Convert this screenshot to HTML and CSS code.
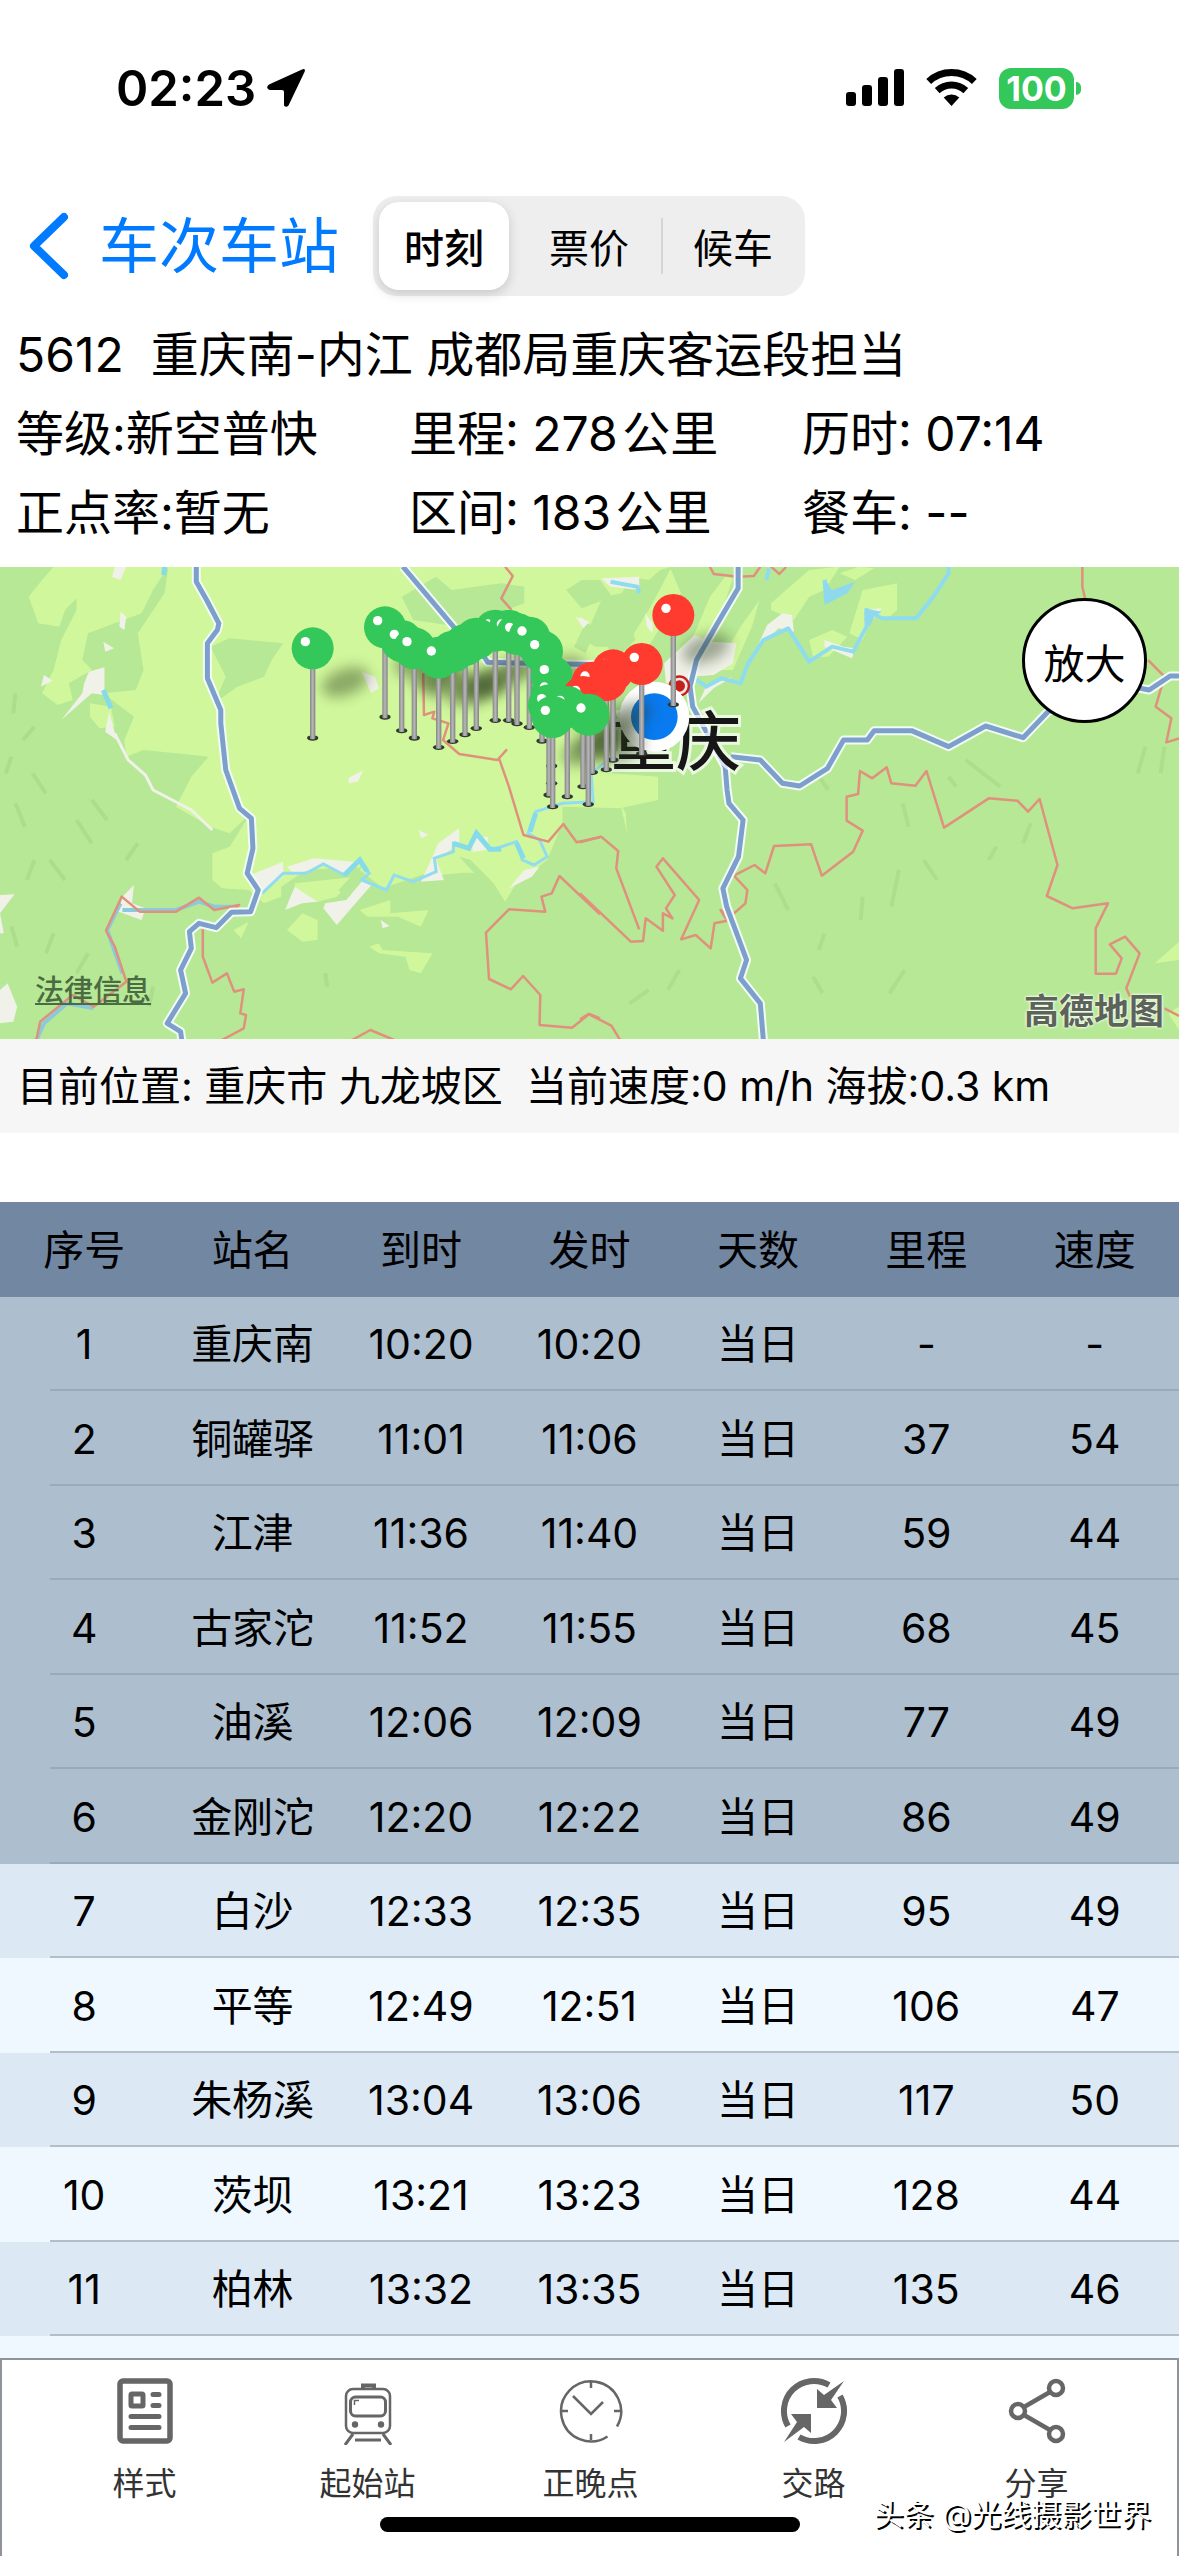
FILE: index.html
```html
<!DOCTYPE html>
<html lang="zh-CN">
<head>
<meta charset="utf-8">
<meta name="viewport" content="width=device-width, initial-scale=1">
<title>5612 重庆南-内江</title>
<link rel="stylesheet" href="styles.css">
</head>
<body>
<div class="app">
  <div class="status">
    <div class="status-side">
      <span class="clock">02:23</span>
      <svg class="arrow" width="40" height="40" viewBox="0 0 40 40"><path d="M3 16.500 36 1.500Q40 0 38.500 4L22.500 37.500Q20 40 18 37.500V24Q18 22 16 22H3.500Q-1 19.500 3 16.500Z"/></svg>
    </div>
    <div class="status-side">
      <svg width="58" height="38" viewBox="0 0 58 38"><rect y="23" width="10" height="14" rx="3"/><rect x="16" y="16" width="10" height="21" rx="3"/><rect x="32" y="8" width="10" height="29" rx="3"/><rect x="48" y="0" width="10" height="37" rx="3"/></svg>
      <svg class="wifi" width="51" height="38" viewBox="0 0 51 38"><path d="M2.700 12.500A33.500 33.500 0 0 1 48.300 12.500M11.200 21.600A21 21 0 0 1 39.800 21.600" fill="none" stroke="#000" stroke-width="7"/><path d="M25.500 37 17.700 28.600A11.500 11.500 0 0 1 33.300 28.600Z"/></svg>
      <span class="battery">100</span>
    </div>
  </div>

  <header class="nav">
    <a class="back" href="#">
      <svg width="42" height="68" viewBox="0 0 42 68"><path d="M36 5 6 34 36 63" fill="none" stroke="currentColor" stroke-width="8" stroke-linecap="round" stroke-linejoin="round"/></svg>
      <span>车次车站</span>
    </a>
    <div class="segments">
      <button class="segment segment-on" type="button">时刻</button>
      <button class="segment" type="button">票价</button>
      <button class="segment segment-split" type="button">候车</button>
    </div>
  </header>

  <section class="info">
    <div class="info-title">5612&nbsp; 重庆南-内江 成都局重庆客运段担当</div>
    <div>等级:新空普快</div><div>里程: 278&#8202;公里</div><div>历时: 07:14</div>
    <div>正点率:暂无</div><div>区间: 183&#8202;公里</div><div>餐车: --</div>
  </section>

  <section class="map">
    <svg class="map-art" viewBox="0 0 1179 472" preserveAspectRatio="xMidYMid slice">
      <defs>
        <filter id="soft" x="-80%" y="-80%" width="260%" height="260%"><feGaussianBlur stdDeviation="19"/></filter>
        <linearGradient id="stick"><stop offset="0" stop-color="#858585"/><stop offset=".5" stop-color="#b8b8b8"/><stop offset="1" stop-color="#808080"/></linearGradient>
        <g id="shade"><ellipse cx="98" cy="-168" rx="74" ry="40" transform="rotate(-20 98 -168)" fill="#283818" opacity=".4" filter="url(#soft)"/></g>
        <g id="stem"><ellipse rx="17" ry="8" fill="#2d3a2c"/><rect x="-8" y="-215" width="16" height="219" rx="3" fill="url(#stick)"/></g>
        <g id="green"><use href="#stem"/><circle cy="-269" r="63" fill="#34c759"/><circle cx="-22" cy="-289" r="14" fill="#fff"/></g>
        <g id="red"><use href="#stem"/><circle cy="-269" r="63" fill="#ff3b30"/><circle cx="-22" cy="-289" r="14" fill="#fff"/></g>
      </defs>
      <rect width="1179" height="472" fill="#b6e895"/>
      <!-- western half: land cover, rivers, borders and roads -->
      <g transform="translate(0 -7) scale(.38265 .33333)">
        <path fill="#d0f79c" d="M440 20 430 100 360 220 375 330 355 390 270 400 350 470 325 540 330 590 375 570 460 580 545 590 500 650 460 740 550 800 600 820 655 760 600 860 555 880 555 960 580 985 650 990 690 1030 735 1010 735 980 800 930 930 920 1000 985 1140 930 1240 940 1200 890 1230 900 1290 970 1320 1025 1350 970 1430 900 1470 790 1470 740 1620 745 1720 720 1720 650 1600 640 1600 400 1700 250 1780 100 1750 20Z"/>
        <path fill="#d0f79c" d="M75 110 110 60 140 20 440 20 400 90 370 160 300 190 230 220 215 300 240 330 180 370 190 420 150 435 110 400 140 330 160 240 200 150 200 115 170 150 155 200 100 190ZM235 430 290 440 300 500 260 505 235 470ZM770 970 930 950 880 1010 830 1025 770 1000ZM940 1050 1020 1020 1020 1060 1120 1050 1100 1100 1040 1070 960 1070ZM750 1110 790 1060 830 1080 830 1140 790 1145ZM965 1160 990 1150 1000 1170 1130 1180 1100 1240 1070 1230 1060 1190 990 1180ZM610 1110 650 1085 630 1135ZM1040 930 1150 900 1235 935 1150 945Z"/>
        <path fill="#b6e895" d="M560 430 590 350 550 260 600 235 740 250 710 300 690 350 620 380ZM1050 110 1140 50 1180 90 1310 70 1370 80 1370 130 1200 200 1080 180ZM1480 90 1520 60 1568 60 1600 110 1520 145ZM1500 260 1530 190 1560 200 1530 280ZM885 990 945 915 935 960 900 1010Z"/>
        <path fill="#f0f1e8" d="M300 20H330L315 60 293 50ZM315 155 330 170 325 210 312 200ZM270 245 298 265 275 275ZM232 335 273 322 273 405 240 400 160 480 215 400 220 370ZM115 345 138 362 107 380ZM285 455 305 540 275 515ZM655 945 740 905 740 950 685 1000ZM750 920 820 895 925 905 905 945 850 915 770 945ZM945 965 975 970 880 1095 845 1045 850 1030 905 1020ZM770 980 830 1025 790 1030 745 1050ZM1145 850 1200 805 1200 850 1140 900 1160 960 1100 965 1130 890ZM1235 835 1275 830 1275 870 1235 875ZM910 655 950 630 935 665 912 670ZM945 335 980 350 990 385 970 400ZM1505 170 1540 185 1525 205ZM1095 810 1120 825 1100 835ZM0 1005 38 1003 0 1060ZM0 1060 10 1120 0 1120ZM320 1010 350 975 345 1030 380 1045 370 1080 310 1055ZM995 1080 1018 1098 1000 1105ZM1370 930 1410 920 1390 950 1330 985ZM0 1290 20 1270 45 1340 35 1385 0 1390Z"/>
        <path fill="none" stroke="#f0f1e8" stroke-width="3" d="M300 520 335 600 380 645 400 690 500 750 555 810" vector-effect="non-scaling-stroke"/>
        <path fill="none" stroke="#93dcf0" stroke-width="3" vector-effect="non-scaling-stroke" d="M685 1000 740 940 800 940 845 912 900 945 940 900 965 940 945 960 1010 990 1030 945 1080 965 1140 935 1135 895 1185 875 1185 850 1225 865 1245 815 1285 870 1350 845 1365 900 1395 915 1430 890 1410 840 1380 820 1400 755 1470 730 1550 725 1545 640 1590 600"/>
        <path fill="none" stroke="#86dbea" stroke-width="5" vector-effect="non-scaling-stroke" d="M1185 850 1225 865 1245 820 1280 868 1310 868M1350 850 1368 895M1385 815 1400 760M270 390 290 445M430 20 428 45M900 945 940 900 960 935"/>
        <path fill="none" stroke="#8bcadb" stroke-width="4" vector-effect="non-scaling-stroke" d="M315 1030 280 1110 320 1240M320 1050 460 1050 520 1025 560 1040 620 1040M245 1345 175 1330 115 1390 95 1440"/>
        <path fill="none" stroke="#e0917d" stroke-width="2.500" stroke-linejoin="round" vector-effect="non-scaling-stroke" d="M95 1440 105 1385 190 1305 245 1340 330 1265 300 1160 277 1112 318 1010 365 1055 460 1055 520 1013 560 1050 625 1035 565 1105 530 1105 530 1190 555 1268 593 1240 612 1295 637 1288 628 1360 643 1365 637 1405 580 1440M920 1440 968 1410 1030 1440M1320 20 1340 48 1310 115 1337 150M1106 340 1108 465 1135 455 1130 475 1172 490 1158 540 1200 582 1300 600 1325 568M1305 598 1330 680 1368 825 1433 845 1472 792 1507 847 1568 832M1568 1063 1462 948 1442 1000 1415 1010 1425 1055 1330 1048 1270 1118 1278 1257 1335 1288 1367 1248 1412 1305 1410 1395 1495 1403 1540 1362 1568 1375"/>
        <path fill="none" stroke="#9ccf7c" stroke-width="4" opacity=".4" vector-effect="non-scaling-stroke" d="M40 400 35 460M30 590 15 640M40 730 65 800M85 640 120 700M70 960 90 900M200 780 240 850M130 900 170 960M30 1100 45 1160M120 1180 140 1120M200 1240 230 1180M60 540 90 500M330 900 360 850M240 720 280 780M400 1280 390 1340M850 1240 855 1280"/>
        <path fill="none" stroke="#f3fbf5" stroke-width="9" stroke-linejoin="round" vector-effect="non-scaling-stroke" d="M513 20V65L540 120 572 190 568 210 542 250V355L577 450V490L590 630 626 745 657 775 661 865 646 940 675 990 655 1055 605 1057 565 1103 520 1090 495 1115 500 1165 472 1230 485 1300 437 1390 472 1415 475 1440M1053 20 1185 200 1265 290 1275 307 1720 318"/>
        <path fill="none" stroke="#7c9fcc" stroke-width="5" stroke-linejoin="round" vector-effect="non-scaling-stroke" d="M513 20V65L540 120 572 190 568 210 542 250V355L577 450V490L590 630 626 745 657 775 661 865 646 940 675 990 655 1055 605 1057 565 1103 520 1090 495 1115 500 1165 472 1230 485 1300 437 1390 472 1415 475 1440M1053 20 1185 200 1265 290 1275 307 1720 318"/>
      </g>
      <!-- eastern half -->
      <g transform="translate(580 -7) scale(.382 .33333)">
        <path fill="#b6e895" d="M10 240 60 110 110 100 130 50 180 60 210 30 240 20 190 130 120 260 40 260ZM60 250 130 180 145 240 100 290Z"/>
        <path fill="#d0f79c" d="M290 250 340 110 380 50 400 55 370 160 320 270ZM500 130 560 70 600 30 680 20 640 90 600 110 560 180 500 150ZM740 90 830 70 830 150 800 180 770 160 740 240 705 220ZM600 240 660 210 700 230 650 290 610 290ZM355 330 420 200 470 120 450 200 400 330ZM680 40 730 20 770 25 720 60ZM1505 1210 1568 1145V1200ZM1540 1360 1568 1340V1410ZM105 730 120 760 123 820Z"/>
        <path fill="#f0f1e8" d="M55 55 155 50 155 90 80 80ZM300 225 345 245 410 250 400 310 350 345 290 350 225 370 220 310ZM490 195 530 160 555 165 560 215 520 205 460 270ZM640 240 690 260 720 265 712 295 640 260ZM310 430 350 385 400 350 330 380ZM740 150 790 145 770 175ZM0 170 20 185 5 200ZM170 160 190 190 190 220 175 200Z"/>
        <path fill="none" stroke="#8fdcf0" stroke-width="4" stroke-linejoin="round" vector-effect="non-scaling-stroke" d="M80 65 150 80 155 100M488 60 495 25M640 60 660 120M300 355 330 380 370 355 420 370 440 310 480 240 545 205 600 305 660 260 715 275 750 200 750 150 790 175 880 175 925 110 965 40V20"/>
        <path fill="#8fd9ef" d="M635 60 660 90 720 65 700 100 640 135ZM745 145 790 155 770 170 758 200 745 180Z"/>
        <path fill="none" stroke="#9ccf7c" stroke-width="4" opacity=".35" vector-effect="non-scaling-stroke" d="M510 970 545 1050M620 640 650 690M845 730 860 800M965 650 985 680M835 930 815 1040M900 900 935 960M1010 600 1100 680M740 1010 735 1080M610 1250 635 1300M180 1290 130 1330M1480 560 1460 640M1530 560 1520 640M1340 480 1360 440M260 1230 230 1290M640 1120 625 1170M1180 790 1160 850M1440 390 1410 440M1090 860 1070 900M850 1230 810 1300"/>
        <path fill="none" stroke="#e0917d" stroke-width="2.500" stroke-linejoin="round" vector-effect="non-scaling-stroke" d="M340 20 350 42 415 50 455 48 472 20M500 20 522 42 540 20M1315 20V80L1322 115M1487 300 1530 350 1507 440 1548 475 1535 547 1568 535M0 847 55 830 100 873 95 925 155 1108M0 1000 133 1145 165 1143 172 1075 217 1112 217 1060 242 1075 225 1045 248 1005 200 920 217 895 312 1020 265 1138 303 1125 342 1165 352 1090 385 1082 368 1050 395 1068 433 1030 438 990 403 947 457 915 485 940 508 858 605 853 633 947 715 875 740 812 698 782 698 710 728 702 733 633 765 655 803 622 815 670 878 677 907 633 953 803 1070 715 1145 722 1173 755 1203 717 1250 915 1222 1008 1290 1045 1382 1030 1350 1105V1241H1403L1418 1195 1387 1153 1427 1130 1465 1180 1430 1285 1440 1310M1530 1345 1568 1368M0 1378 22 1362 82 1397 105 1440"/>
        <path fill="none" stroke="#f3fbf5" stroke-width="9" stroke-linejoin="round" vector-effect="non-scaling-stroke" d="M414 20V85L360 190 305 300 288 380 295 440 380 620 385 690 390 730 427 780 415 890 374 985 384 1040 436 1200 420 1255 472 1330 480 1440M395 590 472 600 530 670 575 678 648 625 690 540H752L770 512H868L965 560 1062 498 1160 533 1225 455 1400 370 1490 390 1545 348H1568"/>
        <path fill="none" stroke="#7c9fcc" stroke-width="5" stroke-linejoin="round" vector-effect="non-scaling-stroke" d="M414 20V85L360 190 305 300 288 380 295 440 380 620 385 690 390 730 427 780 415 890 374 985 384 1040 436 1200 420 1255 472 1330 480 1440M395 590 472 600 530 670 575 678 648 625 690 540H752L770 512H868L965 560 1062 498 1160 533 1225 455 1400 370 1490 390 1545 348H1568"/>
      </g>
      <text class="city" x="611" y="198">重庆</text>
      <!-- current position and station pins, north to south -->
      <g transform="translate(340 13) scale(.33333)">
        <circle cx="1018" cy="318" r="32" fill="#c4201c"/><circle cx="1018" cy="318" r="25" fill="#f6e8e4"/><circle cx="1018" cy="318" r="17" fill="#c4201c"/>
        <circle cx="943" cy="410" r="105" fill="#fff"/><circle cx="943" cy="410" r="70" fill="#0a7af0"/>
        <g>
          <use href="#shade" x="-82" y="474"/><use href="#shade" x="135" y="411"/><use href="#shade" x="185" y="452"/><use href="#shade" x="223" y="474"/><use href="#shade" x="296" y="502"/><use href="#shade" x="338" y="484"/><use href="#shade" x="375" y="464"/><use href="#shade" x="466" y="421"/><use href="#shade" x="568" y="442"/><use href="#shade" x="635" y="558"/><use href="#shade" x="638" y="680"/><use href="#shade" x="682" y="650"/><use href="#shade" x="728" y="622"/><use href="#shade" x="745" y="673"/><use href="#shade" x="764" y="578"/><use href="#shade" x="1000" y="374"/>
        </g>
        <use href="#red" x="1000" y="374"/>
        <use href="#green" x="135" y="411"/>
        <use href="#green" x="466" y="421"/>
        <use href="#green" x="506" y="421"/>
        <use href="#green" x="531" y="431"/>
        <use href="#green" x="568" y="442"/>
        <use href="#green" x="409" y="445"/>
        <use href="#green" x="185" y="452"/>
        <use href="#green" x="375" y="464"/>
        <use href="#green" x="223" y="474"/>
        <use href="#green" x="-82" y="474"/>
        <use href="#green" x="606" y="483"/>
        <use href="#green" x="338" y="484"/>
        <use href="#green" x="296" y="502"/>
        <use href="#red" x="819" y="540"/>
        <use href="#red" x="905" y="521"/>
        <use href="#green" x="635" y="558"/>
        <use href="#red" x="799" y="569"/>
        <use href="#red" x="757" y="577"/>
        <use href="#green" x="635" y="610"/>
        <use href="#red" x="729" y="620"/>
        <use href="#green" x="627" y="645"/>
        <use href="#green" x="682" y="650"/>
        <use href="#green" x="745" y="673"/>
        <use href="#green" x="638" y="680"/>
      </g>
    </svg>
    <a class="legal" href="#">法律信息</a>
    <span class="provider">高德地图</span>
    <button class="enlarge" type="button">放大</button>
  </section>

  <p class="location">目前位置: 重庆市 九龙坡区&nbsp; 当前速度:0 m/h 海拔:0.3 km</p>

  <main class="timetable">
    <table>
      <thead><tr><th>序号</th><th>站名</th><th>到时</th><th>发时</th><th>天数</th><th>里程</th><th>速度</th></tr></thead>
      <tbody>
        <tr class="passed"><td>1</td><td>重庆南</td><td>10:20</td><td>10:20</td><td>当日</td><td>-</td><td>-</td></tr>
        <tr class="passed"><td>2</td><td>铜罐驿</td><td>11:01</td><td>11:06</td><td>当日</td><td>37</td><td>54</td></tr>
        <tr class="passed"><td>3</td><td>江津</td><td>11:36</td><td>11:40</td><td>当日</td><td>59</td><td>44</td></tr>
        <tr class="passed"><td>4</td><td>古家沱</td><td>11:52</td><td>11:55</td><td>当日</td><td>68</td><td>45</td></tr>
        <tr class="passed"><td>5</td><td>油溪</td><td>12:06</td><td>12:09</td><td>当日</td><td>77</td><td>49</td></tr>
        <tr class="passed"><td>6</td><td>金刚沱</td><td>12:20</td><td>12:22</td><td>当日</td><td>86</td><td>49</td></tr>
        <tr><td>7</td><td>白沙</td><td>12:33</td><td>12:35</td><td>当日</td><td>95</td><td>49</td></tr>
        <tr><td>8</td><td>平等</td><td>12:49</td><td>12:51</td><td>当日</td><td>106</td><td>47</td></tr>
        <tr><td>9</td><td>朱杨溪</td><td>13:04</td><td>13:06</td><td>当日</td><td>117</td><td>50</td></tr>
        <tr><td>10</td><td>茨坝</td><td>13:21</td><td>13:23</td><td>当日</td><td>128</td><td>44</td></tr>
        <tr><td>11</td><td>柏林</td><td>13:32</td><td>13:35</td><td>当日</td><td>135</td><td>46</td></tr>
      </tbody>
    </table>
  </main>

  <nav class="tabs">
    <button class="tab" type="button">
      <svg viewBox="0 0 68 68"><rect x="9" y="4" width="50" height="60" rx="3" fill="none" stroke="currentColor" stroke-width="5.500"/><rect x="20" y="17" width="12" height="12" rx="1" fill="none" stroke="currentColor" stroke-width="5"/><path d="M42 17.500h6M42 28.500h6M20 39.500h28M20 50.500h28" stroke="currentColor" stroke-width="5" stroke-linecap="round"/></svg>
      <span>样式</span>
    </button>
    <button class="tab" type="button">
      <svg viewBox="0 0 68 68" fill="none" stroke="currentColor" stroke-width="2.500"><rect x="12" y="12" width="44" height="44" rx="7"/><rect x="16.500" y="20" width="35" height="19" rx="5" stroke-width="3"/><path d="M29 11V8.500h11V11" stroke-width="4"/><path d="M20.500 28v-4.500H25" stroke-width="1.500"/><circle cx="21" cy="47.500" r="3.200" fill="currentColor" stroke="none"/><circle cx="47" cy="47.500" r="3.200" fill="currentColor" stroke="none"/><path d="M19 57 11 68M49 57 57 68M21 63H47" stroke-width="3"/></svg>
      <span>起始站</span>
    </button>
    <button class="tab" type="button">
      <svg viewBox="0 0 68 68" fill="none" stroke="currentColor" stroke-width="2.500"><path d="M50.500 59.500A30 30 0 1 1 60 49.500M34 5v6M34 57v6M5 34h6M63 34h-6M16 19 34 37 46 25"/></svg>
      <span>正晚点</span>
    </button>
    <button class="tab" type="button">
      <svg viewBox="0 0 68 68"><path d="M49 8A30 30 0 0 0 8 49M19 60A30 30 0 0 0 60 19" fill="none" stroke="currentColor" stroke-width="6"/><path d="M64 4 51 23l6 8H37V12l7 6ZM4 65 17 45l-6-8H31V56L24 50Z" fill="currentColor"/></svg>
      <span>交路</span>
    </button>
    <button class="tab" type="button">
      <svg viewBox="0 0 68 68" fill="none" stroke="currentColor" stroke-width="4.500"><circle cx="15" cy="34" r="7"/><circle cx="53" cy="11" r="7"/><circle cx="53" cy="57" r="7"/><path d="M21 30 47 15M21 38 47 53"/></svg>
      <span>分享</span>
    </button>
    <div class="home-bar"></div>
    <span class="watermark">头条 @光线摄影世界</span>
  </nav>
</div>
</body>
</html>
```
FILE: styles.css
```css
* { box-sizing: border-box; }

body {
  margin: 0;
  background: #fff;
  color: #000;
  font-family: Inter, "Noto Sans CJK SC", sans-serif;
}

button {
  margin: 0;
  padding: 0;
  border: 0;
  background: none;
  color: inherit;
  font: inherit;
}

.app {
  display: flex;
  flex-direction: column;
  min-height: 100vh;
}

/* status bar */
.status {
  display: flex;
  align-items: center;
  justify-content: space-between;
  height: 176px;
  padding: 0 105px 0 116px;
}

.status-side {
  display: flex;
  align-items: center;
  gap: 22px;
}

.status-side:first-child { gap: 10px; }

.clock {
  font-size: 49px;
  font-weight: 600;
}

.battery {
  position: relative;
  width: 75px;
  border-radius: 12px;
  background: #34c759;
  color: #fff;
  font-size: 34px;
  font-weight: 700;
  line-height: 41px;
  text-align: center;
}

.battery::after {
  content: "";
  position: absolute;
  top: 14px;
  right: -7px;
  width: 5px;
  height: 13px;
  border-radius: 0 6px 6px 0;
  background: #34c759;
}

/* navigation */
.nav {
  display: flex;
  align-items: center;
  gap: 34px;
  height: 139px;
  padding: 0 28px;
}

.back {
  display: flex;
  align-items: center;
  gap: 29px;
  color: #007aff;
  font-size: 60px;
  line-height: 80px;
  text-decoration: none;
}

.segments {
  display: flex;
  padding: 6px 0 6px 6px;
  border-radius: 24px;
  background: #eeeeef;
}

.segment {
  position: relative;
  width: 144px;
  height: 88px;
  font-size: 40px;
}

.segment-on {
  width: 130px;
  margin-right: 8px;
  border-radius: 20px;
  background: #fff;
  box-shadow: 0 4px 12px rgba(0, 0, 0, .16);
  font-weight: 500;
}

.segment-split::before {
  content: "";
  position: absolute;
  top: 16px;
  left: 0;
  width: 2px;
  height: 56px;
  background: #d5d5d8;
}

/* train details */
.info {
  display: grid;
  grid-template-columns: repeat(3, 1fr);
  align-content: start;
  height: 252px;
  font-size: 48px;
  line-height: 79px;
  white-space: nowrap;
}

.info > div { padding-left: 16px; }
.info-title { grid-column: 1 / -1; }

/* map */
.map {
  position: relative;
  height: 472px;
  overflow: hidden;
}

.map-art {
  display: block;
  width: 100%;
  height: 100%;
}

.city {
  fill: #161616;
  stroke: #fff;
  stroke-opacity: .7;
  stroke-width: 6px;
  paint-order: stroke;
  font-size: 65px;
  font-weight: 500;
}

.legal {
  position: absolute;
  bottom: 32px;
  left: 35px;
  color: #4b6b43;
  font-size: 29px;
  line-height: 32px;
  font-weight: 500;
}

.provider {
  position: absolute;
  right: 15px;
  bottom: 8px;
  color: #5c6459;
  font-size: 35px;
  font-weight: 700;
  line-height: 40px;
  text-shadow: 0 0 3px #fff, 0 0 3px #fff;
}

.enlarge {
  position: absolute;
  top: 31px;
  right: 32px;
  width: 125px;
  height: 125px;
  border: 3px solid #000;
  border-radius: 50%;
  background: #fff;
  font-size: 41px;
}

.location {
  margin: 0 0 69px;
  padding: 0 17px;
  background: #f6f6f6;
  font-size: 41px;
  line-height: 94px;
  white-space: nowrap;
}

/* timetable */
.timetable {
  flex: 1;
  background: #f0f8ff;
}

.timetable table {
  width: 100%;
  border-collapse: collapse;
  table-layout: fixed;
  font-size: 41px;
  line-height: 60px;
  text-align: center;
}

.timetable th,
.timetable td {
  height: 94px;
  padding: 0;
  font-weight: 400;
}

.timetable th,
.timetable tr:nth-child(even) td { height: 95px; }

.timetable tr {
  background: #f0f8ff linear-gradient(#b3bfc8, #b3bfc8) right bottom / calc(100% - 50px) 2px no-repeat;
}

.timetable tr:nth-child(odd) { background-color: #dce9f5; }
.timetable thead tr:nth-child(odd) { background: #7287a2; }

.timetable tbody tr.passed {
  background-color: #adbece;
  background-image: linear-gradient(#9aaab9, #9aaab9);
}

/* bottom tabs */
.tabs {
  position: relative;
  display: grid;
  grid-template-columns: repeat(5, 1fr);
  align-items: start;
  height: 198px;
  padding: 17px 29px 0 31px;
  border: 2px solid #8f949b;
  border-bottom: 0;
  background: #fff;
}

.tab {
  display: flex;
  flex-direction: column;
  align-items: center;
  gap: 19px;
  color: #666;
  font-size: 32px;
  line-height: 40px;
}

.tab svg {
  width: 68px;
  height: 68px;
}

.tab span { color: #333; }

.home-bar {
  position: absolute;
  bottom: 24px;
  left: 50%;
  width: 420px;
  height: 15px;
  margin-left: -210px;
  border-radius: 8px;
  background: #000;
}

.watermark {
  position: absolute;
  right: 26px;
  bottom: 22px;
  color: #fff;
  font-size: 30px;
  line-height: 40px;
  text-shadow: 2px 2px 0 #000;
}
```
